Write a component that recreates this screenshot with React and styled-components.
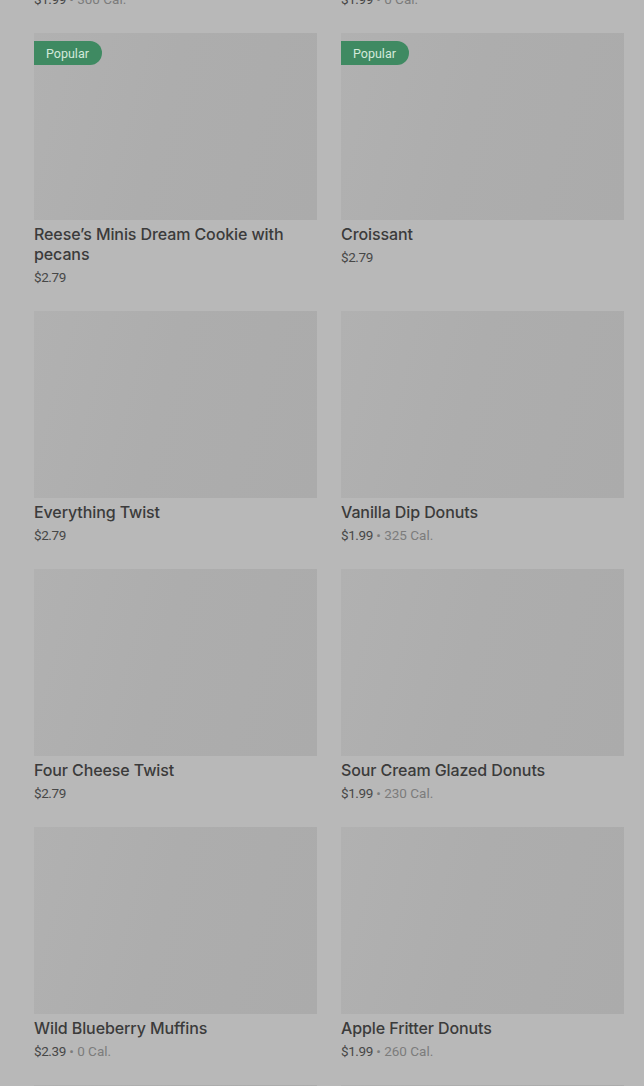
import React from "react";
import styled, { createGlobalStyle } from "styled-components";

const Global = createGlobalStyle`
  html, body { margin: 0; padding: 0; background: #b8b8b8; }
  body { font-family: Inter, "Noto Sans", sans-serif; overflow: hidden; }
`;

const Page = styled.div`
  width: 644px;
  height: 1086px;
  overflow: hidden;
  background: #b8b8b8;
`;

const Grid = styled.div`
  display: grid;
  grid-template-columns: 283px 283px;
  column-gap: 24px;
  row-gap: 25px;
  padding: 0 20px 0 34px;
  margin-top: -225px;
`;

const Card = styled.div`
  display: flex;
  flex-direction: column;
`;

const Thumb = styled.div`
  position: relative;
  height: 187px;
  background: linear-gradient(105deg, #b1b1b1 0%, #adadad 45%, #ababab 100%);
`;

const Badge = styled.span`
  position: absolute;
  left: 0;
  top: 8px;
  height: 24px;
  padding: 0 13px 0 12px;
  display: flex;
  align-items: center;
  background: #3f8a62;
  color: #d3e9da;
  font-family: Roboto, "Liberation Sans", sans-serif;
  font-size: 12.5px;
  border-radius: 0 12px 12px 0;
`;

const Name = styled.div`
  margin-top: 4px;
  font-size: 16px;
  line-height: 20px;
  font-weight: 500;
  color: #3b3b3b;
  letter-spacing: -0.1px;
`;

const Meta = styled.div`
  margin-top: 4px;
  font-family: Roboto, "Liberation Sans", sans-serif;
  font-size: 13.5px;
  line-height: 18px;
  color: #474747;
  letter-spacing: -0.4px;
`;

const Cal = styled.span`
  color: #7c7c7c;
  letter-spacing: 0;
`;

const items = [
  { name: "Glazed Donuts", price: "$1.99", cal: "300 Cal." },
  { name: "Coffee", price: "$1.99", cal: "0 Cal." },
  { name: "Reese’s Minis Dream Cookie with pecans", price: "$2.79", popular: true },
  { name: "Croissant", price: "$2.79", popular: true },
  { name: "Everything Twist", price: "$2.79" },
  { name: "Vanilla Dip Donuts", price: "$1.99", cal: "325 Cal." },
  { name: "Four Cheese Twist", price: "$2.79" },
  { name: "Sour Cream Glazed Donuts", price: "$1.99", cal: "230 Cal." },
  { name: "Wild Blueberry Muffins", price: "$2.39", cal: "0 Cal." },
  { name: "Apple Fritter Donuts", price: "$1.99", cal: "260 Cal." },
  { name: "Boston Kreme Donuts", price: "$1.99", cal: "300 Cal." },
  { name: "Chocolate Frosted Donuts", price: "$1.99", cal: "270 Cal." },
];

export default function App() {
  return (
    <Page>
      <Global />
      <Grid>
        {items.map((it, i) => (
          <Card key={i}>
            <Thumb>{it.popular && <Badge>Popular</Badge>}</Thumb>
            <Name>{it.name}</Name>
            <Meta>
              {it.price}
              {it.cal && <Cal> • {it.cal}</Cal>}
            </Meta>
          </Card>
        ))}
      </Grid>
    </Page>
  );
}
